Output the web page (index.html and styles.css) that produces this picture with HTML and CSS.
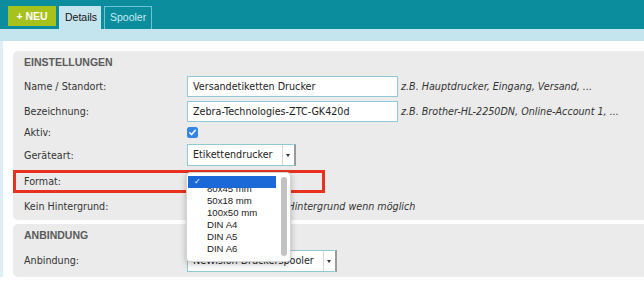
FILE: index.html
```html
<!DOCTYPE html>
<html lang="de">
<head>
    <meta charset="UTF-8">
    <title>Drucker - Details</title>
    <link rel="stylesheet" href="styles.css">
</head>
<body>
    <nav class="topbar">
        <a class="btn-new" href="#">+ NEU</a>
        <a class="tab tab-active" href="#">Details</a>
        <a class="tab" href="#">Spooler</a>
    </nav>
    <div class="strip"></div>

    <main class="content">
        <section class="panel">
            <h2 class="panel-title">Einstellungen</h2>

            <div class="row">
                <label class="label">Name / Standort:</label>
                <div class="value">
                    <input class="field" type="text" value="Versandetiketten Drucker">
                    <span class="hint">z.B. Hauptdrucker, Eingang, Versand, ...</span>
                </div>
            </div>

            <div class="row">
                <label class="label">Bezeichnung:</label>
                <div class="value">
                    <input class="field" type="text" value="Zebra-Technologies-ZTC-GK420d">
                    <span class="hint">z.B. Brother-HL-2250DN, Online-Account 1, ...</span>
                </div>
            </div>

            <div class="row row-check">
                <label class="label">Aktiv:</label>
                <div class="value">
                    <svg class="check" width="11" height="11" viewBox="0 0 11 11">
                        <rect x="0" y="0" width="11" height="11" rx="2.5" fill="#2f86e6"/>
                        <path d="M2.8 5.8 L4.6 7.6 L8.3 3.2" fill="none" stroke="#fff" stroke-width="1.5" stroke-linecap="round" stroke-linejoin="round"/>
                    </svg>
                </div>
            </div>

            <div class="row row-select">
                <label class="label">Geräteart:</label>
                <div class="value">
                    <div class="select select-type">
                        <span class="select-text">Etikettendrucker</span>
                        <span class="select-arrow"></span>
                    </div>
                </div>
            </div>

            <div class="row row-format">
                <label class="label">Format:</label>
                <div class="value"></div>

                <!-- markierung -->
                <div class="highlight"></div>

                <!-- geoeffnetes auswahlmenue -->
                <div class="menu">
                    <div class="menu-selected">&#10003;</div>
                    <div class="menu-scroll">
                        <ul class="menu-list">
                            <li>80x45 mm</li>
                            <li>50x18 mm</li>
                            <li>100x50 mm</li>
                            <li>DIN A4</li>
                            <li>DIN A5</li>
                            <li>DIN A6</li>
                        </ul>
                    </div>
                    <div class="menu-thumb"></div>
                </div>
            </div>

            <div class="row">
                <label class="label">Kein Hintergrund:</label>
                <div class="value">
                    <span class="hint hint-bg">Etiketten ohne Hintergrund wenn möglich</span>
                </div>
            </div>
        </section>

        <section class="panel">
            <h2 class="panel-title">Anbindung</h2>

            <div class="row row-last">
                <label class="label">Anbindung:</label>
                <div class="value">
                    <div class="select select-spooler">
                        <span class="select-text">NeWision Druckerspooler</span>
                        <span class="select-arrow"></span>
                    </div>
                </div>
            </div>
        </section>
    </main>
</body>
</html>
```

FILE: styles.css
```css
body {
    margin: 0;
    padding: 0;
    background-color: #fff;
    font-family: "DejaVu Sans", Verdana, sans-serif;
    font-size: 9.6px;
    color: #333;
    overflow: hidden;
}

.topbar {
    display: flex;
    align-items: flex-start;
    gap: 3px;
    height: 29px;
    box-sizing: border-box;
    padding: 6px 0 0 8px;
    background-color: #0c8d9e;
}

.topbar a {
    text-decoration: none;
    font-family: "Liberation Sans", Arial, sans-serif;
    box-sizing: border-box;
}

.btn-new {
    width: 48px;
    height: 20px;
    line-height: 20px;
    text-align: center;
    background-color: #a7c21c;
    color: #fff;
    font-weight: bold;
    font-size: 10.5px;
}

.tab {
    height: 23px;
    line-height: 21px;
    padding: 0 5px;
    border: 1px solid #6fc3d2;
    border-bottom: none;
    color: #c6ecf3;
    font-size: 10.5px;
}

.tab-active {
    width: 42px;
    background-color: #c4e5ee;
    border-color: #c4e5ee;
    color: #111;
}

.strip {
    height: 12px;
    background-color: #c4e5ee;
}

.content {
    border-left: 3px solid #dceff5;
    padding: 10px 0 0 10px;
}

.panel {
    background-color: #ebebeb;
    border-radius: 5px 0 0 5px;
    padding: 3px 0 1px 11px;
    margin-bottom: 4px;
}

.panel-title {
    margin: 0 0 4px;
    height: 16px;
    line-height: 16px;
    font-family: "Liberation Sans", Arial, sans-serif;
    font-size: 10.5px;
    font-weight: bold;
    text-transform: uppercase;
    color: #5a5a5a;
}

.row {
    position: relative;
    display: flex;
    align-items: center;
    height: 25px;
}

.row-check {
    height: 17px;
}

.row-select {
    height: 28px;
}

.row-last {
    height: 25px;
    margin-top: 5px;
    margin-bottom: 3px;
}

.label {
    width: 163px;
    flex-shrink: 0;
}

.value {
    display: flex;
    align-items: center;
}

.field {
    width: 211px;
    height: 21px;
    box-sizing: border-box;
    margin: 0;
    padding: 0 5px;
    border: 1px solid #92c9d8;
    background-color: #fff;
    font-family: "DejaVu Sans", Verdana, sans-serif;
    font-size: 9.6px;
    color: #222;
}

.hint {
    margin-left: 3px;
    font-style: italic;
    color: #333;
}

.hint-bg {
    margin-left: 27px;
}

.check {
    display: block;
}

.select {
    display: flex;
    align-items: stretch;
    height: 22px;
    box-sizing: border-box;
    border: 1px solid #92c9d8;
    border-right: 2px solid #9a9a9a;
    background-color: #fff;
}

.select-type {
    width: 109px;
}

.select-spooler {
    width: 150px;
}

.select-text {
    flex: 1;
    line-height: 20px;
    padding-left: 5px;
    color: #222;
    white-space: nowrap;
    overflow: hidden;
}

.select-arrow {
    width: 11px;
    border-left: 1px solid #d6d6d6;
    position: relative;
}

.select-arrow::after {
    content: "";
    position: absolute;
    left: 3px;
    top: 9px;
    border-left: 2.5px solid transparent;
    border-right: 2.5px solid transparent;
    border-top: 3px solid #333;
}

.highlight {
    position: absolute;
    left: -11px;
    top: 1px;
    width: 312px;
    height: 23px;
    box-sizing: border-box;
    border: 3px solid #e8321f;
    pointer-events: none;
}

.menu {
    position: absolute;
    left: 162px;
    top: 3px;
    width: 105px;
    height: 90px;
    box-sizing: border-box;
    padding-top: 3px;
    background-color: #fff;
    border: 1px solid #d4d4d4;
    border-radius: 4px;
    box-shadow: 0 2px 6px rgba(0, 0, 0, 0.25);
    font-family: "Liberation Sans", Arial, sans-serif;
    font-size: 9.6px;
    color: #1a1a1a;
    z-index: 2;
}

.menu-selected {
    margin-left: 1px;
    width: 88px;
    height: 12px;
    line-height: 12px;
    padding-left: 6px;
    box-sizing: border-box;
    background-color: #1b68d8;
    color: #fff;
    font-size: 8px;
    position: relative;
    z-index: 1;
}

.menu-scroll {
    height: 71px;
    overflow: hidden;
}

.menu-list {
    list-style: none;
    margin: -5px 0 0;
    padding: 0 0 0 20px;
}

.menu-list li {
    height: 12px;
    line-height: 12px;
}

.menu-thumb {
    position: absolute;
    left: 94px;
    top: 4px;
    width: 6px;
    height: 79px;
    border-radius: 3px;
    background-color: #c2c2c2;
}
```
